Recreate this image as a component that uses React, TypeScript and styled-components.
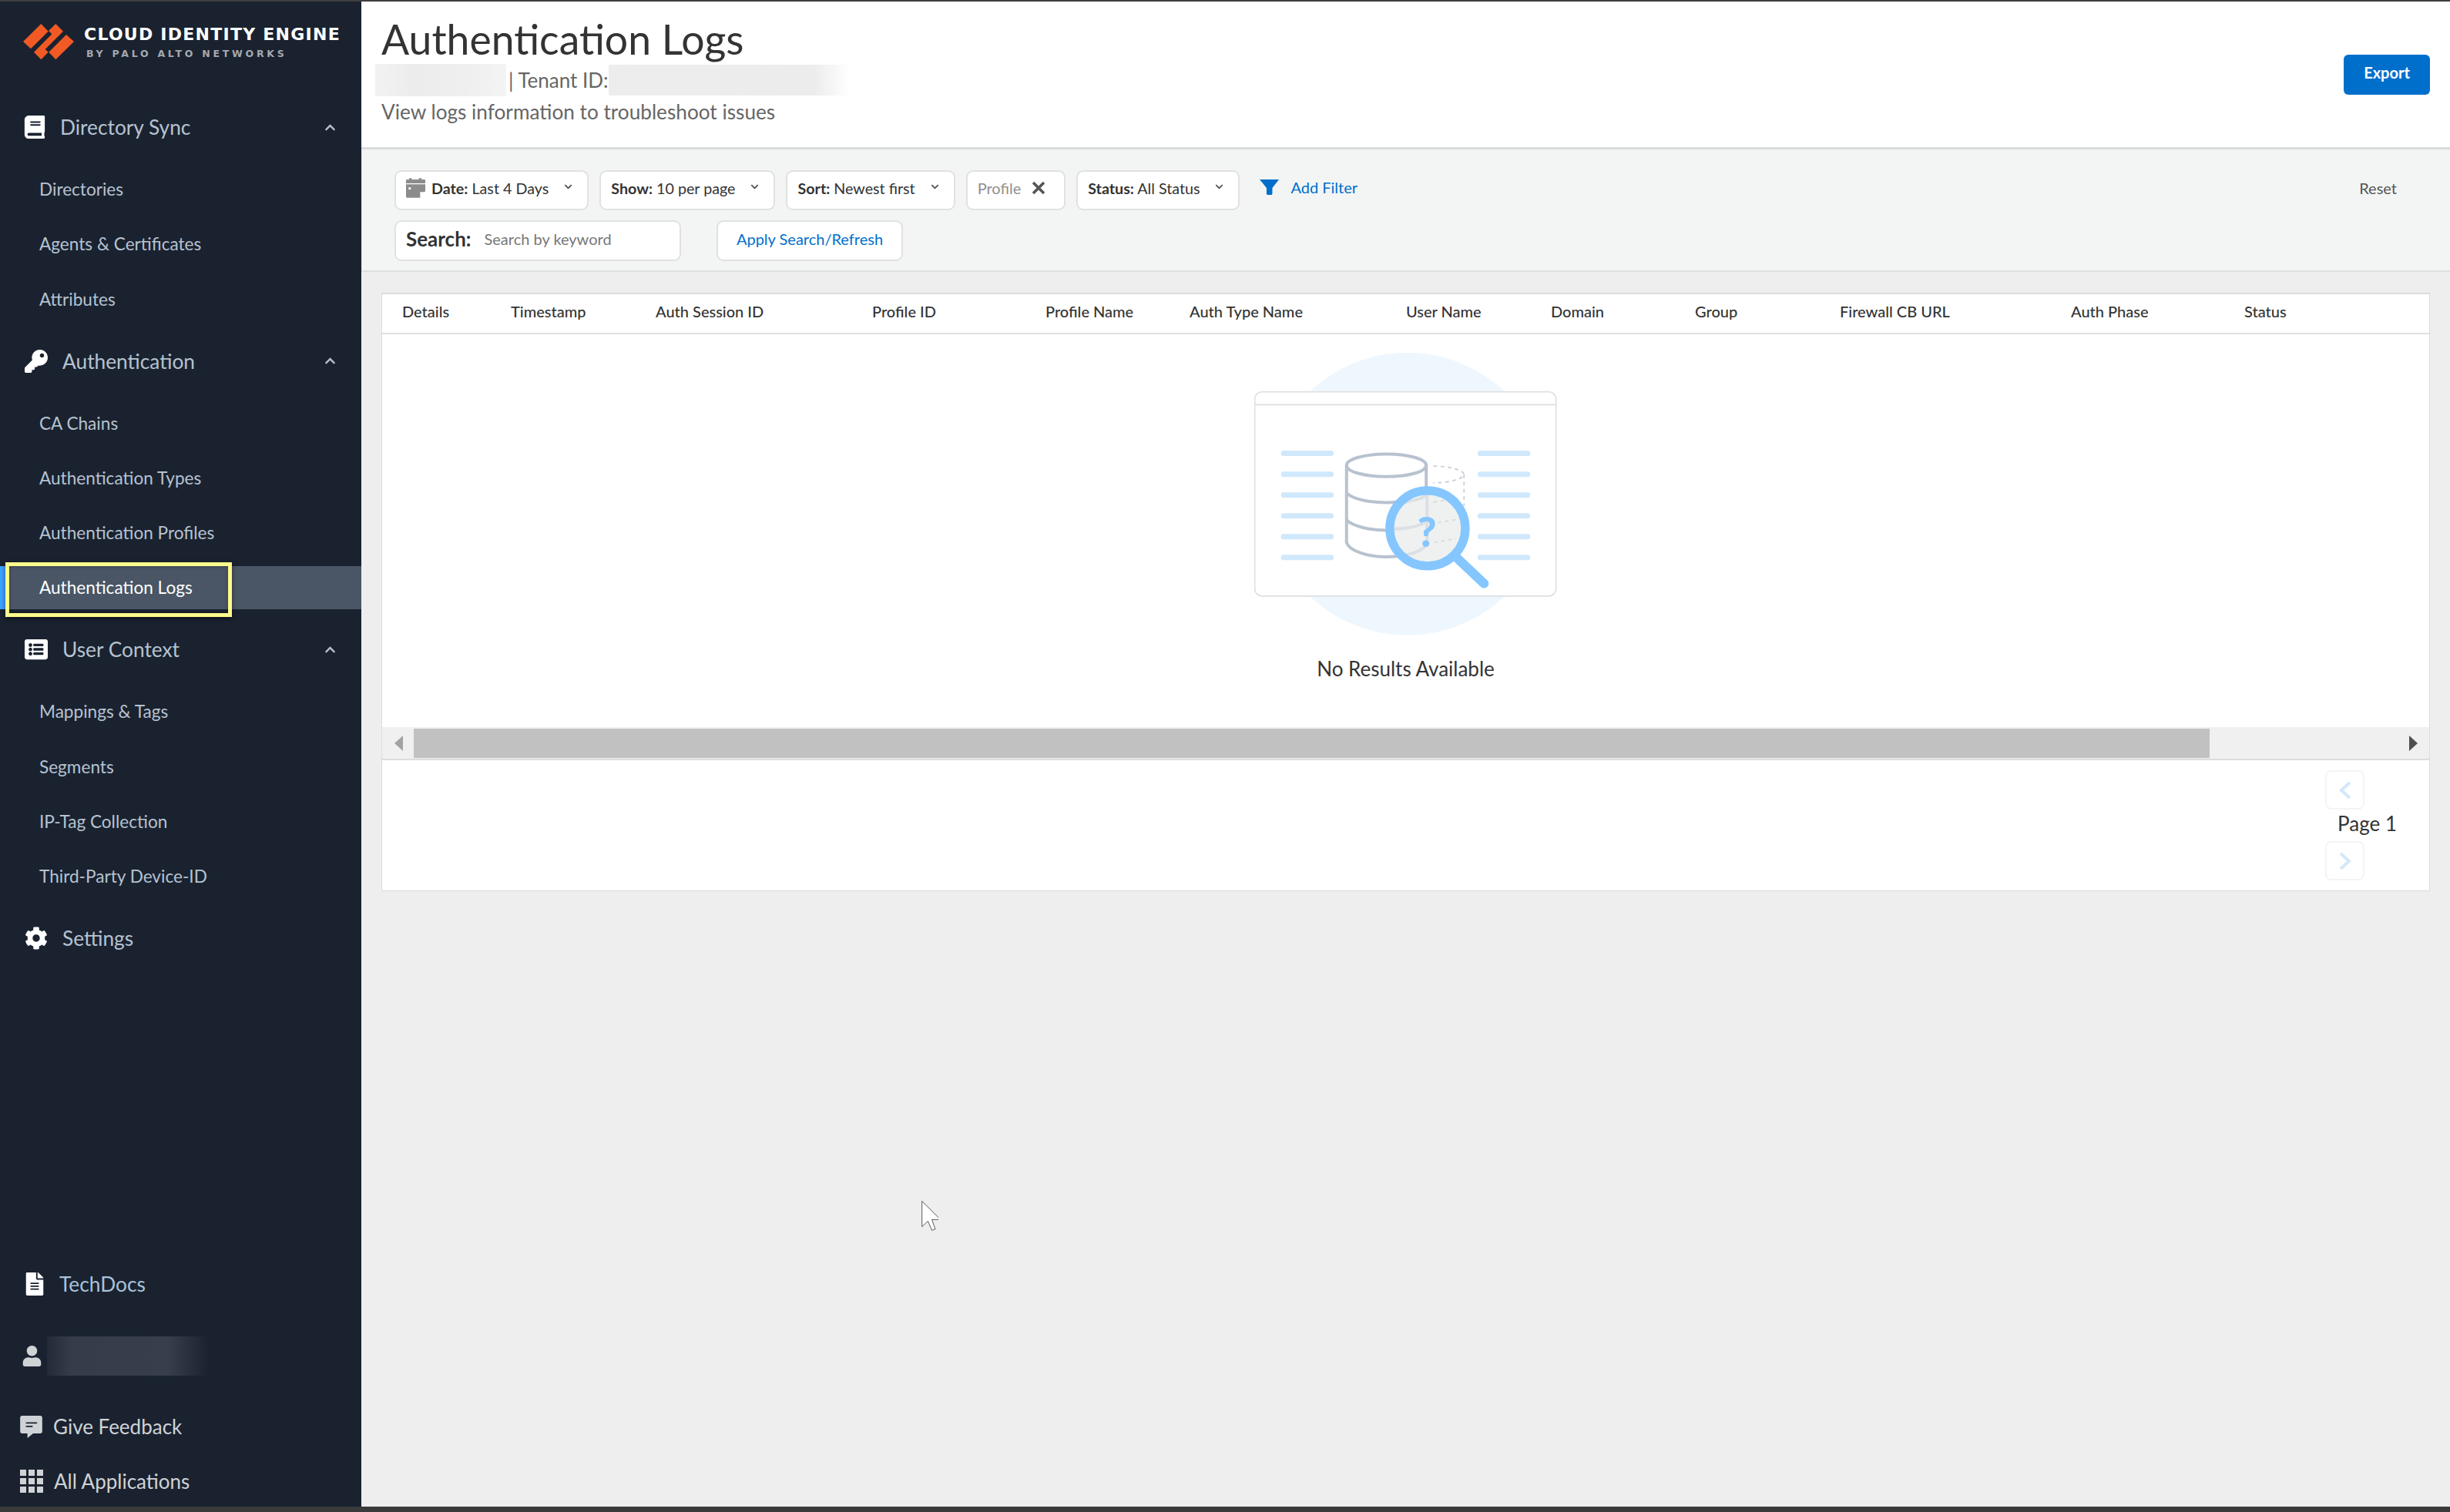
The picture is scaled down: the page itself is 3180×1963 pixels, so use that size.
import React from 'react';
import styled, { createGlobalStyle } from 'styled-components';
import { FaBook, FaKey, FaListAlt, FaCog, FaFileAlt, FaUser, FaChevronUp, FaChevronDown } from 'react-icons/fa';

const GlobalStyle = createGlobalStyle`
  html, body {
    margin: 0;
    padding: 0;
    background: #eeeeee;
  }
  * {
    box-sizing: border-box;
  }
`;

const navGroups = [
  {
    title: 'Directory Sync',
    icon: <FaBook size={30} />,
    offset: 46,
    pull: 2,
    items: ['Directories', 'Agents & Certificates', 'Attributes'],
  },
  {
    title: 'Authentication',
    icon: <FaKey size={30} />,
    offset: 49,
    pull: 0,
    items: ['CA Chains', 'Authentication Types', 'Authentication Profiles', 'Authentication Logs'],
  },
  {
    title: 'User Context',
    icon: <FaListAlt size={30} />,
    offset: 49,
    pull: 0,
    items: ['Mappings & Tags', 'Segments', 'IP-Tag Collection', 'Third-Party Device-ID'],
  },
];

const columns = [
  'Details',
  'Timestamp',
  'Auth Session ID',
  'Profile ID',
  'Profile Name',
  'Auth Type Name',
  'User Name',
  'Domain',
  'Group',
  'Firewall CB URL',
  'Auth Phase',
  'Status',
];

function Logo() {
  return (
    <svg width="90" height="70" viewBox="0 0 270 210">
      <g fill="#f15a24">
        <polygon points="100,33 128,62 60,130 30,102" />
        <polygon points="157,33 186,62 116,132 128,143 100,172 72,143 142,73 129,60" />
        <polygon points="198,75 228,102 157,172 130,143" />
      </g>
    </svg>
  );
}

function CalendarIcon() {
  return (
    <svg width="25" height="26" viewBox="0 0 75 76">
      <path
        fill="#8c8c8c"
        d="M12 0h10v5h28V0h10v5h11q4 0 4 4v11H0V9q0-4 4-4h8zM0 24h75v26q0 4-4 4H55v22H4q-4 0-4-4zM10 36v8h9v-8z"
        fillRule="evenodd"
      />
    </svg>
  );
}

function FunnelIcon() {
  return (
    <svg width="25" height="22" viewBox="0 0 73 58">
      <path fill="#006fcc" d="M0 0h73L48 32v22q0 4-4 4H30q-4 0-4-4V32z" />
    </svg>
  );
}

function CloseIcon() {
  return (
    <svg width="18" height="18" viewBox="0 0 18 18">
      <path d="M2 2l14 14M16 2L2 16" stroke="#555" strokeWidth="3.6" fill="none" />
    </svg>
  );
}

function FeedbackIcon() {
  return (
    <svg width="29" height="29" viewBox="0 0 85 86">
      <path fill="#d0d3d6" d="M8 0h69q8 0 8 8v52q0 8-8 8H50L28 86V68H8q-8 0-8-8V8q0-8 8-8z" />
      <path stroke="#1a2230" strokeWidth="5" d="M22 28h43M22 41h26" />
    </svg>
  );
}

function AppsIcon() {
  const cells = [0, 1, 2];
  return (
    <svg width="30" height="30" viewBox="0 0 30 30">
      {cells.map((row) =>
        cells.map((col) => (
          <rect key={`${row}-${col}`} x={col * 11} y={row * 11} width="8" height="8" fill="#d0d3d6" />
        )),
      )}
    </svg>
  );
}

function EmptyIllustration() {
  const barRows = [465, 546, 627, 708, 789, 870];
  return (
    <svg width="393" height="367" viewBox="146 84 1178 1100">
      <circle cx="741" cy="633" r="550" fill="#eff7fe" />
      <rect x="148" y="236" width="1172" height="795" rx="28" fill="#fff" stroke="#dfdfdf" strokeWidth="5" />
      <path d="M148 286H1320" stroke="#dfdfdf" strokeWidth="5" />
      {barRows.map((y) => (
        <g key={y} fill="#d0e8fc">
          <rect x="250" y={y} width="205" height="21" rx="10" />
          <rect x="1015" y={y} width="205" height="21" rx="10" />
        </g>
      ))}
      <g fill="none" stroke="#c3cad4" strokeWidth="5" strokeDasharray="14 14">
        <path d="M843 525C900 525 962 540 962 558C962 575 900 590 843 590" />
        <path d="M962 558V680" />
      </g>
      <g fill="none" stroke="#b8c2cf" strokeWidth="12">
        <ellipse cx="660" cy="522" rx="155" ry="44" />
        <path d="M505 522V822C515 855 585 878 660 878C680 878 700 877 715 874" />
        <path d="M815 522V615" />
        <path d="M505 630C530 655 600 667 660 667C675 667 690 666 705 664" />
        <path d="M505 735C530 760 600 775 660 775H690" />
      </g>
      <circle cx="820" cy="767" r="147" fill="#eff1f0" />
      <g fill="none" stroke="#dcdfe3" strokeWidth="12">
        <path d="M818 625V830" />
        <path d="M695 670C740 665 790 655 815 640" />
        <path d="M690 770C730 770 790 760 815 740" />
        <path d="M738 870C770 865 800 850 818 830" />
      </g>
      <g fill="none" stroke="#d5d9de" strokeWidth="5" strokeDasharray="14 14">
        <path d="M843 665L950 650" />
        <path d="M860 745L930 733" />
        <path d="M845 822L930 808" />
      </g>
      <circle cx="820" cy="767" r="147" fill="none" stroke="#85c6ff" strokeWidth="34" />
      <path d="M932 880L1040 982" stroke="#85c6ff" strokeWidth="36" strokeLinecap="round" />
      <text x="818" y="840" textAnchor="middle" fontFamily="Lato, sans-serif" fontWeight="900" fontSize="162" fill="#85c6ff">
        ?
      </text>
    </svg>
  );
}

function Chip(props: { label: string; value: string; icon?: React.ReactNode }) {
  return (
    <FilterChip>
      {props.icon}
      <ChipText>
        <b>{props.label}</b> {props.value}
      </ChipText>
      <ChipCaret>
        <FaChevronDown size={11} />
      </ChipCaret>
    </FilterChip>
  );
}

function App() {
  return (
    <Page>
      <GlobalStyle />
      <Sidebar>
        <Brand>
          <Logo />
          <BrandText>
            <BrandName>CLOUD IDENTITY ENGINE</BrandName>
            <BrandSub>BY PALO ALTO NETWORKS</BrandSub>
          </BrandText>
        </Brand>
        <Nav>
          {navGroups.map((group) => (
            <NavGroup key={group.title}>
              <NavHead>
                <NavIcon $width={group.offset} $pull={group.pull}>
                  {group.icon}
                </NavIcon>
                <span>{group.title}</span>
                <NavCaret>
                  <FaChevronUp size={15} />
                </NavCaret>
              </NavHead>
              <SubList>
                {group.items.map((item) => (
                  <SubItem key={item} $active={item === 'Authentication Logs'}>
                    {item}
                    {item === 'Authentication Logs' && <Highlight />}
                  </SubItem>
                ))}
              </SubList>
            </NavGroup>
          ))}
          <NavHead>
            <NavIcon $width={49}>
              <FaCog size={30} />
            </NavIcon>
            <span>Settings</span>
          </NavHead>
        </Nav>
        <SideFooter>
          <NavHead>
            <NavIcon $width={45} $pull={2}>
              <FaFileAlt size={30} />
            </NavIcon>
            <DocsLabel>TechDocs</DocsLabel>
          </NavHead>
          <UserRow>
            <FaUser size={27} />
            <BlurredName />
          </UserRow>
          <FooterLink>
            <FeedbackIcon />
            <span>Give Feedback</span>
          </FooterLink>
          <FooterLink $tight>
            <AppsIcon />
            <span>All Applications</span>
          </FooterLink>
        </SideFooter>
      </Sidebar>

      <Main>
        <Header>
          <TitleBlock>
            <Title>Authentication Logs</Title>
            <TenantRow>
              <BlurredTenant />
              <TenantLabel>| Tenant ID:</TenantLabel>
              <BlurredId />
            </TenantRow>
            <Subtitle>View logs information to troubleshoot issues</Subtitle>
          </TitleBlock>
          <ExportButton>Export</ExportButton>
        </Header>

        <FilterBand>
          <FilterRow>
            <Chip label="Date:" value="Last 4 Days" icon={<CalendarIcon />} />
            <Chip label="Show:" value="10 per page" />
            <Chip label="Sort:" value="Newest first" />
            <ProfileChip>
              <span>Profile</span>
              <CloseIcon />
            </ProfileChip>
            <Chip label="Status:" value="All Status" />
            <AddFilter>
              <FunnelIcon />
              <span>Add Filter</span>
            </AddFilter>
            <Reset>Reset</Reset>
          </FilterRow>
          <SearchRow>
            <SearchBox>
              <SearchLabel>Search:</SearchLabel>
              <Placeholder>Search by keyword</Placeholder>
            </SearchBox>
            <ApplyButton>Apply Search/Refresh</ApplyButton>
          </SearchRow>
        </FilterBand>

        <Content>
          <Card>
            <TableHead>
              {columns.map((col) => (
                <span key={col}>{col}</span>
              ))}
            </TableHead>
            <EmptyState>
              <EmptyIllustration />
              <EmptyText>No Results Available</EmptyText>
            </EmptyState>
            <ScrollTrack>
              <ScrollLeft>
                <Arrow $dir="left" />
              </ScrollLeft>
              <ScrollThumb />
              <ScrollRight>
                <Arrow $dir="right" />
              </ScrollRight>
            </ScrollTrack>
            <Pagination>
              <Pager>
                <PageButton>
                  <svg width="16" height="24" viewBox="0 0 16 24">
                    <path d="M14 2L3 12l11 10" fill="none" stroke="#d4e7f9" strokeWidth="4" />
                  </svg>
                </PageButton>
                <PageLabel>Page 1</PageLabel>
                <PageButton>
                  <svg width="16" height="24" viewBox="0 0 16 24">
                    <path d="M2 2l11 10L2 22" fill="none" stroke="#d4e7f9" strokeWidth="4" />
                  </svg>
                </PageButton>
              </Pager>
            </Pagination>
          </Card>
        </Content>

        <Pointer width="25" height="39" viewBox="226 117 54 115">
          <path
            d="M227 118L298 189H265L278 225L265 230L250 195L227 216Z"
            fill="#fff"
            stroke="#111"
            strokeWidth="2"
          />
        </Pointer>
      </Main>
    </Page>
  );
}

export default App;

const Page = styled.div`
  width: 3180px;
  height: 1963px;
  display: flex;
  overflow: hidden;
  border-top: 2px solid #3e3e3e;
  border-bottom: 7px solid #3a3a3a;
  font-family: Lato, 'Open Sans', sans-serif;
  color: #333;
`;

const Sidebar = styled.aside`
  width: 469px;
  flex: none;
  display: flex;
  flex-direction: column;
  background: #1a2230;
  color: #b6c2d0;
`;

const Brand = styled.div`
  height: 88px;
  display: flex;
  align-items: flex-start;
  padding: 18px 0 0 20px;
`;

const BrandText = styled.div`
  display: flex;
  flex-direction: column;
  margin: 14px 0 0 -1px;
`;

const BrandName = styled.div`
  font-family: 'DejaVu Sans', sans-serif;
  font-weight: 700;
  font-size: 22px;
  line-height: 22px;
  letter-spacing: 1.25px;
  color: #fff;
  white-space: nowrap;
`;

const BrandSub = styled.div`
  font-family: 'DejaVu Sans', sans-serif;
  font-weight: 700;
  font-size: 12.5px;
  line-height: 14px;
  letter-spacing: 3.75px;
  margin: 7px 0 0 3px;
  color: #a5a9ae;
  white-space: nowrap;
`;

const Nav = styled.nav`
  margin-top: 47px;
`;

const NavGroup = styled.div`
  margin-bottom: 24.5px;
`;

const NavHead = styled.div`
  height: 56px;
  display: flex;
  align-items: center;
  padding: 0 33px 0 32px;
  font-size: 26.3px;
`;

const NavIcon = styled.span<{ $width: number; $pull?: number }>`
  width: ${({ $width, $pull = 0 }) => $width + $pull}px;
  margin-left: ${({ $pull = 0 }) => -$pull}px;
  flex: none;
  display: flex;
  align-items: center;
  color: #fff;
`;

const NavCaret = styled.span`
  margin-left: auto;
  display: flex;
  color: #b9bec5;
`;

const SubList = styled.div`
  margin-top: 24.5px;
  display: flex;
  flex-direction: column;
  gap: 15.3px;
`;

const SubItem = styled.div<{ $active?: boolean }>`
  position: relative;
  height: 56px;
  display: flex;
  align-items: center;
  font-size: 22.6px;
  padding-left: ${({ $active }) => ($active ? '44px' : '51px')};
  border-left: ${({ $active }) => ($active ? '7px solid #3da2ff' : 'none')};
  background: ${({ $active }) => ($active ? '#4a5666' : 'transparent')};
  color: ${({ $active }) => ($active ? '#fff' : 'inherit')};
`;

const Highlight = styled.div`
  position: absolute;
  left: 0;
  top: -5px;
  width: 294px;
  height: 71px;
  border: 5px solid #fdfb8c;
  box-shadow: 0 2px 6px rgba(0, 0, 0, 0.5), inset 0 0 4px rgba(0, 0, 0, 0.35);
`;

const SideFooter = styled.div`
  margin-top: auto;
  padding-bottom: 7px;
`;

const DocsLabel = styled.span`
  color: #a9c2da;
`;

const UserRow = styled.div`
  height: 52px;
  margin-top: 39px;
  display: flex;
  align-items: center;
  padding-left: 28px;
  color: #d0d3d6;
`;

const BlurredName = styled.div`
  width: 210px;
  height: 51px;
  margin-left: 6px;
  background: linear-gradient(90deg, #232a38 0%, #363c49 15%, #383e4b 75%, #1a2230 100%);
`;

const FooterLink = styled.div<{ $tight?: boolean }>`
  height: 52px;
  margin-top: ${({ $tight }) => ($tight ? '19px' : '40px')};
  display: flex;
  align-items: center;
  gap: 14px;
  padding-left: 26px;
  font-size: 26px;
  color: #cfd2d6;
`;

const Main = styled.main`
  position: relative;
  flex: 1;
  display: flex;
  flex-direction: column;
  background: #eeeeee;
`;

const Header = styled.header`
  height: 192px;
  flex: none;
  display: flex;
  align-items: center;
  justify-content: space-between;
  padding: 0 26px;
  background: #fff;
  border-bottom: 3px solid #d9dcdb;
`;

const TitleBlock = styled.div`
  margin-bottom: 8px;
`;

const Title = styled.h1`
  margin: -2px 0 2px;
  font-size: 53.5px;
  line-height: 62px;
  font-weight: 400;
  color: #333;
`;

const TenantRow = styled.div`
  display: flex;
  align-items: center;
  height: 42px;
`;

const BlurredTenant = styled.div`
  width: 170px;
  height: 42px;
  margin-left: -8px;
  background: linear-gradient(90deg, #f2f2f2, #ececec 30%, #efefef 70%, #f4f4f4);
`;

const TenantLabel = styled.span`
  width: 130px;
  margin-left: 3px;
  font-size: 26px;
  color: #666;
  white-space: nowrap;
`;

const BlurredId = styled.div`
  width: 313px;
  height: 40px;
  background: linear-gradient(90deg, #ededed 0%, #ececec 85%, #ffffff 100%);
`;

const Subtitle = styled.div`
  font-size: 26.2px;
  line-height: 38px;
  margin-top: 1px;
  color: #666;
`;

const ExportButton = styled.button`
  width: 112px;
  height: 52px;
  padding: 0 0 6px;
  border: none;
  border-radius: 6px;
  background: #006fcc;
  color: #fff;
  font-family: inherit;
  font-size: 20px;
  font-weight: 700;
`;

const FilterBand = styled.section`
  flex: none;
  height: 159px;
  padding: 27px 69px 0 42px;
  background: #f3f5f4;
  border-bottom: 2px solid #dedede;
  border-left: 1px solid #e4e6e5;
`;

const FilterRow = styled.div`
  display: flex;
  align-items: center;
  gap: 14px;
  font-size: 20px;
`;

const FilterChip = styled.div`
  height: 52px;
  display: flex;
  align-items: center;
  padding: 0 19px 6px 13px;
  background: #fff;
  border: 2px solid #e1e1e1;
  border-radius: 9px;
`;

const ChipText = styled.span`
  margin-left: 8px;
  font-size: 19.7px;
  white-space: nowrap;

  &:first-child {
    margin-left: 0;
  }
`;

const ChipCaret = styled.span`
  display: flex;
  margin: -4px 0 0 20px;
  color: #555;
`;

const ProfileChip = styled(FilterChip)`
  gap: 14px;
  padding-right: 24px;
  color: #8f8f8f;
`;

const AddFilter = styled.div`
  display: flex;
  align-items: center;
  gap: 15px;
  margin: -8px 0 0 12px;
  color: #006fcc;
`;

const Reset = styled.span`
  margin: 0 0 6px auto;
  color: #555;
`;

const SearchRow = styled.div`
  display: flex;
  gap: 46px;
  margin-top: 13px;
`;

const SearchBox = styled(FilterChip)`
  width: 372px;
  height: 53px;
  padding: 0 13px 6px;
`;

const SearchLabel = styled.span`
  font-size: 26px;
  font-weight: 700;
  white-space: nowrap;
`;

const Placeholder = styled.span`
  margin-left: 17px;
  font-size: 20px;
  color: #777;
  white-space: nowrap;
`;

const ApplyButton = styled(FilterChip)`
  width: 242px;
  height: 53px;
  padding: 0 0 6px;
  justify-content: center;
  font-size: 20px;
  color: #006fcc;
`;

const Content = styled.div`
  flex: 1;
  padding: 27px 26px 0 26px;
`;

const Card = styled.div`
  background: #fff;
  border: 1px solid #dcdcdc;
  border-top-width: 2px;
`;

const TableHead = styled.div`
  height: 52px;
  display: grid;
  grid-template-columns: 141px 188px 281px 225px 187px 281px 188px 187px 188px 300px 225px 1fr;
  align-items: center;
  padding: 0 0 6px 26px;
  border-bottom: 2px solid #e0e0e0;
  font-size: 20px;
  font-weight: 500;
  color: #333;
`;

const EmptyState = styled.div`
  height: 510px;
  display: flex;
  flex-direction: column;
  align-items: center;
  padding-top: 24px;
`;

const EmptyText = styled.div`
  margin-top: 23px;
  font-size: 26px;
  line-height: 40px;
  color: #333;
`;

const ScrollTrack = styled.div`
  height: 43px;
  display: flex;
  align-items: center;
  background: #f0f0f0;
  border-bottom: 2px solid #dcdcdc;
`;

const ScrollLeft = styled.div`
  width: 41px;
  display: flex;
  justify-content: flex-start;
  padding-left: 16px;
`;

const ScrollRight = styled.div`
  margin-left: auto;
  padding-right: 15px;
  display: flex;
`;

const ScrollThumb = styled.div`
  width: 2331px;
  height: 38px;
  background: #c1c1c1;
`;

const Arrow = styled.span<{ $dir: 'left' | 'right' }>`
  width: 0;
  height: 0;
  border-top: 10px solid transparent;
  border-bottom: 10px solid transparent;
  border-left: ${({ $dir }) => ($dir === 'right' ? '11px solid #505050' : 'none')};
  border-right: ${({ $dir }) => ($dir === 'left' ? '11px solid #a3a3a3' : 'none')};
`;

const Pagination = styled.div`
  display: flex;
  justify-content: flex-end;
  padding: 13px 42px 13px 0;
`;

const Pager = styled.div`
  display: flex;
  flex-direction: column;
  align-items: flex-start;
`;

const PageButton = styled.div`
  width: 51px;
  height: 51px;
  display: flex;
  align-items: center;
  justify-content: center;
  border: 2px solid #f4f4f4;
  border-radius: 8px;
`;

const PageLabel = styled.div`
  height: 41px;
  margin-left: 16px;
  padding-bottom: 6px;
  display: flex;
  align-items: center;
  font-size: 26px;
  color: #333;
`;

const Pointer = styled.svg`
  position: absolute;
  left: 724px;
  top: 1557px;
`;
